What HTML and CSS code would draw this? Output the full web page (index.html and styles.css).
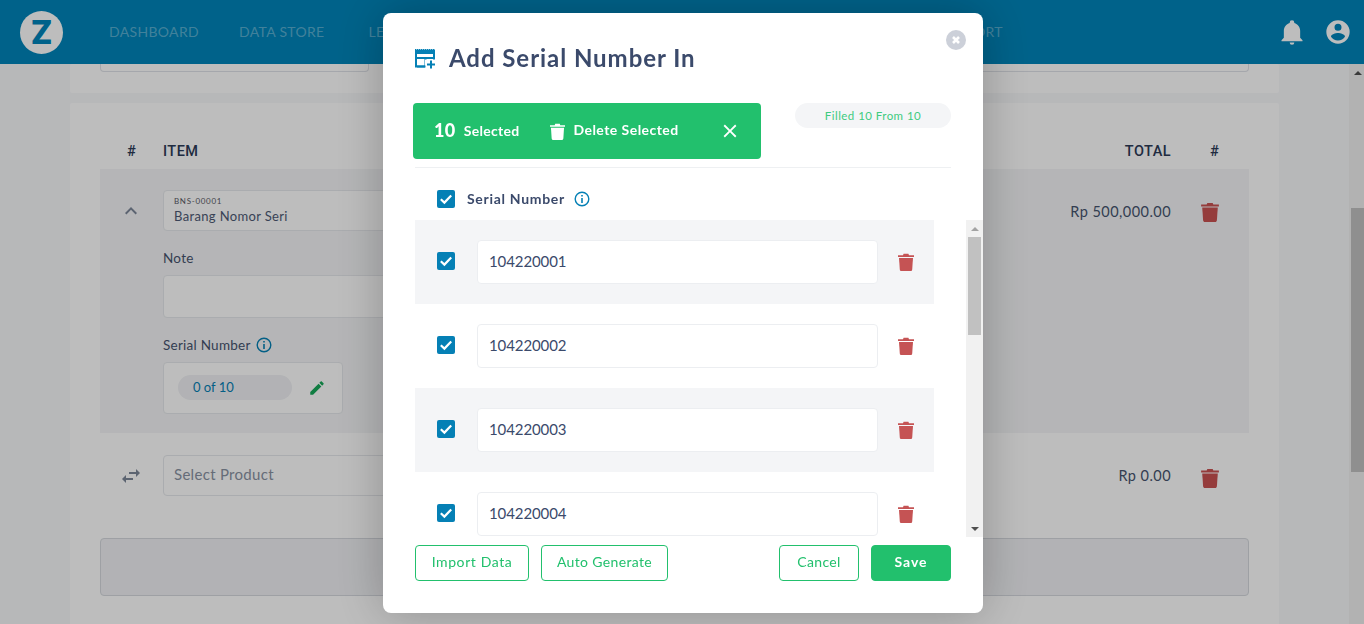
FILE: index.html
```html
<!DOCTYPE html>
<html lang="en">
<head>
<meta charset="utf-8">
<title>Add Serial Number In</title>
<link rel="stylesheet" href="styles.css">
</head>
<body>
<svg class="defs" aria-hidden="true">
  <symbol id="i-trash" viewBox="0 0 16 18"><path d="M0 2.200h5L5.600 .8h4.800L11 2.200h5V4H0z"/><path d="M1 5h14l-.8 11.400c-.1 .9-.7 1.600-1.600 1.600H3.400c-.9 0-1.500-.7-1.600-1.600z"/></symbol>
  <symbol id="i-check" viewBox="0 0 18 18"><path d="M3.800 9.300l3.600 3.300L14.200 5.600" fill="none" stroke="#fff" stroke-width="2.200"/></symbol>
  <symbol id="i-info" viewBox="0 0 16 16"><circle cx="8" cy="8" r="6.800" fill="none" stroke="currentColor" stroke-width="1.400"/><path d="M7.200 4h1.600v1.600H7.200zM7.200 7h1.600v5H7.200z" fill="currentColor"/></symbol>
</svg>

<div class="app">
  <header class="topbar">
    <div class="logo">Z</div>
    <nav class="nav">
      <a>DASHBOARD</a><a>DATA STORE</a><a>LEDGER</a><a>PURCHASE</a><a>SALES</a><a>INVENTORY</a><a>MANUFACTURING</a><a>REPORT</a>
    </nav>
    <div class="top-icons">
      <svg class="top-icon" viewBox="0 0 24 24"><path d="M21,19V20H3V19L5,17V11C5,7.900 7.030,5.170 10,4.290C10,4.190 10,4.100 10,4A2,2 0 0,1 12,2A2,2 0 0,1 14,4C14,4.100 14,4.190 14,4.290C16.970,5.170 19,7.900 19,11V17L21,19M14,21A2,2 0 0,1 12,23A2,2 0 0,1 10,21"/></svg>
      <svg class="top-icon" viewBox="0 0 24 24"><path d="M12,19.200C9.500,19.200 7.290,17.920 6,16C6.030,14 10,12.900 12,12.900C14,12.900 17.970,14 18,16C16.710,17.920 14.500,19.200 12,19.200M12,5A3,3 0 0,1 15,8A3,3 0 0,1 12,11A3,3 0 0,1 9,8A3,3 0 0,1 12,5M12,2A10,10 0 0,0 2,12A10,10 0 0,0 12,22A10,10 0 0,0 22,12A10,10 0 0,0 12,2Z"/></svg>
    </div>
  </header>

  <div class="workspace">
    <main class="content">
      <section class="card card-top">
        <div class="stub-row"><div class="stub"></div><div class="stub"></div></div>
      </section>
      <section class="card card-items">
        <div class="t-row t-head">
          <div class="t-c">#</div><div>ITEM</div><div>TOTAL</div><div class="t-c t-c2">#</div>
        </div>
        <div class="t-row t-open">
          <div class="t-c t-c1"><svg class="chev" viewBox="0 0 24 24"><path d="M7.410,15.410L12,10.830L16.590,15.410L18,14L12,8L6,14L7.410,15.410Z"/></svg></div>
          <div class="item-col">
            <div class="field item-field"><small>BNS-00001</small><span>Barang Nomor Seri</span></div>
            <label class="lbl">Note</label>
            <div class="field note-field"></div>
            <label class="lbl lbl-sn">Serial Number <svg class="info"><use href="#i-info"/></svg></label>
            <div class="field sn-box"><span class="sn-pill">0 of 10</span>
              <svg class="pencil" viewBox="0 0 24 24"><path d="M20.710,7.040C21.100,6.650 21.100,6 20.710,5.630L18.370,3.290C18,2.900 17.350,2.900 16.960,3.290L15.120,5.120L18.870,8.870M3,17.250V21H6.750L17.810,9.930L14.060,6.180L3,17.250Z"/></svg>
            </div>
          </div>
          <div class="amount">Rp 500,000.00</div>
          <div class="t-c"><svg class="trash-bg"><use href="#i-trash"/></svg></div>
        </div>
        <div class="t-row t-add">
          <div class="t-c t-c1"><svg class="swap" viewBox="0 0 24 24"><path d="M21,9L17,5V8H10V10H17V13M7,11L3,15L7,19V16H14V14H7V11Z"/></svg></div>
          <div class="field select-field">Select Product</div>
          <div class="amount">Rp 0.00</div>
          <div class="t-c"><svg class="trash-bg"><use href="#i-trash"/></svg></div>
        </div>
        <div class="add-box"></div>
      </section>
    </main>
    <div class="page-scroll">
      <div class="arrow-up"></div>
      <div class="page-thumb"></div>
    </div>
  </div>
</div>

<div class="overlay">
  <div class="modal">
    <button class="modal-close" aria-label="Close"><svg viewBox="0 0 12 12"><path d="M3 3l6 6M9 3l-6 6" stroke="#fff" stroke-width="2.600"/></svg></button>
    <div class="modal-title">
      <svg class="title-icon" viewBox="0 0 20 20"><path d="M0 .5H20" stroke="#0580b5" stroke-dasharray="1.500 .5" fill="none"/><path d="M0 1h20v4H0z" fill="#0580b5"/><path d="M1 4V17.500H10.500V9H1M10.500 9H19M19 4V11" fill="none" stroke="#0580b5" stroke-width="2"/><path d="M10 10.500h10v10H10z" fill="#fff"/><path d="M15 11.500h2v3h3v2h-3v3h-2v-3h-3v-2h3z" fill="#0580b5"/><path d="M2 16.500h8.500v2H2z" fill="#0580b5"/></svg>
      <h1>Add Serial Number In</h1>
    </div>
    <div class="status-row">
      <div class="bulk-bar">
        <b class="bulk-count">10</b><span class="bulk-label">Selected</span>
        <svg class="bulk-trash"><use href="#i-trash"/></svg><span class="bulk-delete">Delete Selected</span>
        <svg class="bulk-close" viewBox="0 0 24 24"><path d="M19,6.410L17.590,5L12,10.590L6.410,5L5,6.410L10.590,12L5,17.590L6.410,19L12,13.410L17.590,19L19,17.590L13.410,12L19,6.410Z"/></svg>
      </div>
      <div class="filled-pill">Filled 10 From 10</div>
    </div>
    <div class="list-head">
      <span class="cbx"><svg><use href="#i-check"/></svg></span>
      <strong>Serial Number</strong>
      <svg class="info"><use href="#i-info"/></svg>
    </div>
    <div class="list-wrap">
      <div class="list">
        <div class="sn-row"><span class="cbx"><svg><use href="#i-check"/></svg></span><div class="sn-input">104220001</div><svg class="trash-row"><use href="#i-trash"/></svg></div>
        <div class="sn-row"><span class="cbx"><svg><use href="#i-check"/></svg></span><div class="sn-input">104220002</div><svg class="trash-row"><use href="#i-trash"/></svg></div>
        <div class="sn-row"><span class="cbx"><svg><use href="#i-check"/></svg></span><div class="sn-input">104220003</div><svg class="trash-row"><use href="#i-trash"/></svg></div>
        <div class="sn-row"><span class="cbx"><svg><use href="#i-check"/></svg></span><div class="sn-input">104220004</div><svg class="trash-row"><use href="#i-trash"/></svg></div>
      </div>
      <div class="list-scroll">
        <div class="list-arrow-up"></div>
        <div class="list-thumb"></div>
        <div class="list-arrow-down"></div>
      </div>
    </div>
    <div class="modal-foot">
      <button class="btn btn-import">Import Data</button>
      <button class="btn btn-auto">Auto Generate</button>
      <button class="btn btn-cancel">Cancel</button>
      <button class="btn btn-save">Save</button>
    </div>
  </div>
</div>
</body>
</html>
```
FILE: styles.css
```css
* { box-sizing: border-box; }
html, body { margin: 0; height: 100%; overflow: hidden; }
body { font-family: "Lato", "Liberation Sans", sans-serif; color: #3b4a6b; background: #f7f8fa; }
.defs { display: none; }

.app { width: 1366px; height: 626px; display: flex; flex-direction: column; }

/* top bar */
.topbar { height: 64px; flex: none; background: #0085ba; display: flex; align-items: center; padding-left: 20px; }
.logo { width: 43px; height: 43px; border-radius: 50%; background: #fff; color: #0085ba; font: 800 32px/43px "Inter", sans-serif; text-align: center; }
.nav { display: flex; gap: 40px; margin-left: 46px; margin-top: -2px; font-size: 14px; letter-spacing: .33px; color: rgba(255,255,255,.36); white-space: nowrap; }
.nav a:nth-child(3) { margin-left: 4px; }
.top-icons { margin-left: auto; margin-right: 14px; display: flex; gap: 18px; }
.top-icon { width: 28px; height: 28px; fill: #fff; }

/* page */
.workspace { flex: 1; min-height: 0; display: flex; }
.content { flex: 1; padding: 0 70px; overflow: hidden; }
.page-scroll { width: 17px; flex: none; background: #f1f1f1; padding: 7px 2px 0; display: flex; flex-direction: column; align-items: center; }
.arrow-up { width: 0; height: 0; border: 4px solid transparent; border-top: 0; border-bottom: 4px solid #505050; }
.page-thumb { width: 13px; height: 264px; margin-top: 133px; background: #c1c1c1; }

.card { background: #fff; border-radius: 2px; }
.card-top { height: 29px; padding: 0 30px; margin-bottom: 10px; }
.stub-row { display: flex; gap: 20px; }
.stub { flex: 1; height: 8px; border: 1px solid #dfe2e8; border-top: 0; border-radius: 0 0 4px 4px; }
.stub:first-child { flex: none; width: 269px; }
.stub:last-child { margin-left: 580px; }

.card-items { padding: 0 30px; height: 540px; }
.t-row { display: grid; grid-template-columns: 63px 1fr auto 78px; }
.t-head { padding-top: 38px; height: 66px; font: 500 14.500px/22px "Roboto", sans-serif; color: #2c3a57; letter-spacing: .45px; }
.t-c { text-align: center; }
.t-c1 { padding-right: 2px; }
.t-c2 { padding-left: 9px; }
.t-open { background: #f4f5f7; height: 264px; padding-top: 21px; }
.chev { width: 24px; height: 24px; fill: #7c8799; display: block; margin: 9px auto 0; }
.item-col { display: flex; flex-direction: column; align-items: flex-start; }
.field { background: #fff; border: 1px solid #e6e8ec; border-radius: 4px; }
.item-field { width: 560px; height: 41px; padding: 4px 10px; display: flex; flex-direction: column; }
.item-field small { font-size: 8px; line-height: 12px; letter-spacing: .7px; color: #5a5a66; }
.item-field span { font-size: 13px; line-height: 18px; letter-spacing: .35px; color: #4d5a75; }
.lbl { font-size: 13.500px; line-height: 16px; margin-top: 19px; margin-bottom: 9px; color: #46536e; letter-spacing: .25px; display: flex; align-items: center; gap: 5px; }
.note-field { width: 560px; height: 43px; }
.lbl-sn { margin-top: 19px; }
.info { width: 16px; height: 16px; color: #0580b5; }
.sn-box { width: 180px; height: 52px; display: flex; align-items: center; padding-left: 14px; padding-bottom: 2px; }
.sn-pill { width: 114px; height: 25px; border-radius: 13px; background: #f0f1f4; color: #0580b5; font-size: 13px; line-height: 25px; padding-left: 15px; }
.pencil { width: 18px; height: 18px; fill: #17a95a; margin-left: 16px; margin-top: 2px; }
.amount { font-size: 14.500px; letter-spacing: .45px; color: #46536e; padding-top: 13px; line-height: 18px; }
.trash-bg { width: 18px; height: 20px; fill: #ca5151; margin-top: 12px; }
.t-add { height: 105px; padding-top: 22px; }
.swap { width: 24px; height: 24px; fill: #7c8799; display: block; margin: 9px auto 0; }
.select-field { width: 560px; height: 41px; line-height: 36px; padding-left: 10px; font-size: 15px; color: #8992a3; letter-spacing: .3px; }
.t-add .amount { padding-top: 12px; }
.t-add .trash-bg { margin-top: 13px; }
.add-box { height: 58px; background: #f0f1f4; border: 1px solid #d5d8de; border-radius: 4px; }

/* modal */
.overlay { position: fixed; left: 0; top: 0; width: 1366px; height: 626px; background: rgba(0,0,0,.26); display: flex; align-items: center; justify-content: center; }
.modal { position: relative; width: 600px; height: 600px; background: #fff; border-radius: 8px; padding: 31px 32px 0; box-shadow: 0 0 50px rgba(0,0,0,.25); display: flex; flex-direction: column; }
.modal-close { position: absolute; top: 17px; right: 17px; width: 20px; height: 20px; padding: 4px; border: 0; border-radius: 50%; background: #ccd0d9; }
.modal-close svg { display: block; width: 12px; height: 12px; }
.modal-title { height: 28px; margin-bottom: 31px; display: flex; align-items: center; gap: 14px; }
.title-icon { width: 20px; height: 20px; margin-top: 2px; }
.modal-title h1 { margin: 0; font-size: 24px; line-height: 28px; font-weight: 700; color: #3b4a6b; letter-spacing: .95px; }

.status-row { display: flex; justify-content: space-between; align-items: flex-start; height: 65px; border-bottom: 1px solid #eef0f2; flex: none; }
.bulk-bar { width: 348px; height: 56px; margin-left: -2px; background: #22c06d; border-radius: 4px; color: #fff; display: flex; align-items: center; padding-left: 21px; font-weight: 700; }
.bulk-count { font-size: 18px; letter-spacing: .4px; margin-top: -3px; }
.bulk-label { font-size: 14px; margin-left: 8px; letter-spacing: .3px; margin-top: -2px; }
.bulk-trash { width: 15px; height: 17px; fill: #fff; margin-left: 30px; }
.bulk-delete { font-size: 14px; margin-left: 9px; letter-spacing: .45px; margin-top: -4px; }
.bulk-close { width: 22px; height: 22px; fill: #fff; margin-left: 40px; }
.filled-pill { width: 156px; height: 25px; border-radius: 13px; background: #f4f5f7; color: #3ecb7f; font-size: 11.500px; line-height: 25px; text-align: center; letter-spacing: .45px; }

.list-head { height: 52px; flex: none; padding: 22px 0 0 22px; display: flex; align-items: flex-start; }
.list-head strong { font-size: 14px; line-height: 18px; margin-left: 12px; letter-spacing: .7px; font-weight: 700; }
.list-head .info { margin: 1px 0 0 9px; }
.cbx { width: 18px; height: 18px; flex: none; border-radius: 2px; background: #0580b5; }
.cbx svg { display: block; width: 18px; height: 18px; }

.list-wrap { width: 568px; height: 317px; flex: none; display: flex; }
.list { flex: 1; min-width: 0; overflow: hidden; }
.list-scroll { width: 17px; flex: none; background: #f1f1f1; padding: 7px 2px 6px; display: flex; flex-direction: column; align-items: center; }
.list-arrow-up { width: 0; height: 0; flex: none; border: 4px solid transparent; border-top: 0; border-bottom: 4px solid #a3a3a3; }
.list-thumb { width: 13px; height: 98px; flex: none; margin-top: 6px; background: #c1c1c1; }
.list-arrow-down { width: 0; height: 0; flex: none; margin-top: auto; border: 4px solid transparent; border-bottom: 0; border-top: 4px solid #505050; }

.sn-row { width: 519px; height: 84px; padding-left: 22px; display: flex; align-items: center; }
.sn-row:nth-child(odd) { background: #f4f5f7; }
.sn-row .cbx { margin-top: -2px; }
.sn-input { width: 401px; height: 44px; margin-left: 22px; padding-left: 11px; line-height: 40px; background: #fff; border: 1px solid #eceef1; border-radius: 4px; font-size: 15px; letter-spacing: -.1px; color: #3b4a6b; }
.trash-row { width: 16px; height: 18px; margin-left: 20px; fill: #c55354; }

.modal-foot { display: flex; margin-top: 8px; height: 36px; }
.btn { height: 36px; border-radius: 4px; border: 1px solid #22c06d; background: #fff; color: #22c06d; font: 14px/1 "Lato", sans-serif; letter-spacing: .35px; padding: 0 0 2px; }
.btn-import { width: 114px; letter-spacing: .6px; }
.btn-auto { width: 127px; margin-left: 12px; }
.btn-cancel { width: 80px; margin-left: auto; }
.btn-save { width: 80px; margin-left: 12px; background: #22c06d; color: #fff; font-weight: 700; letter-spacing: .9px; }
```
